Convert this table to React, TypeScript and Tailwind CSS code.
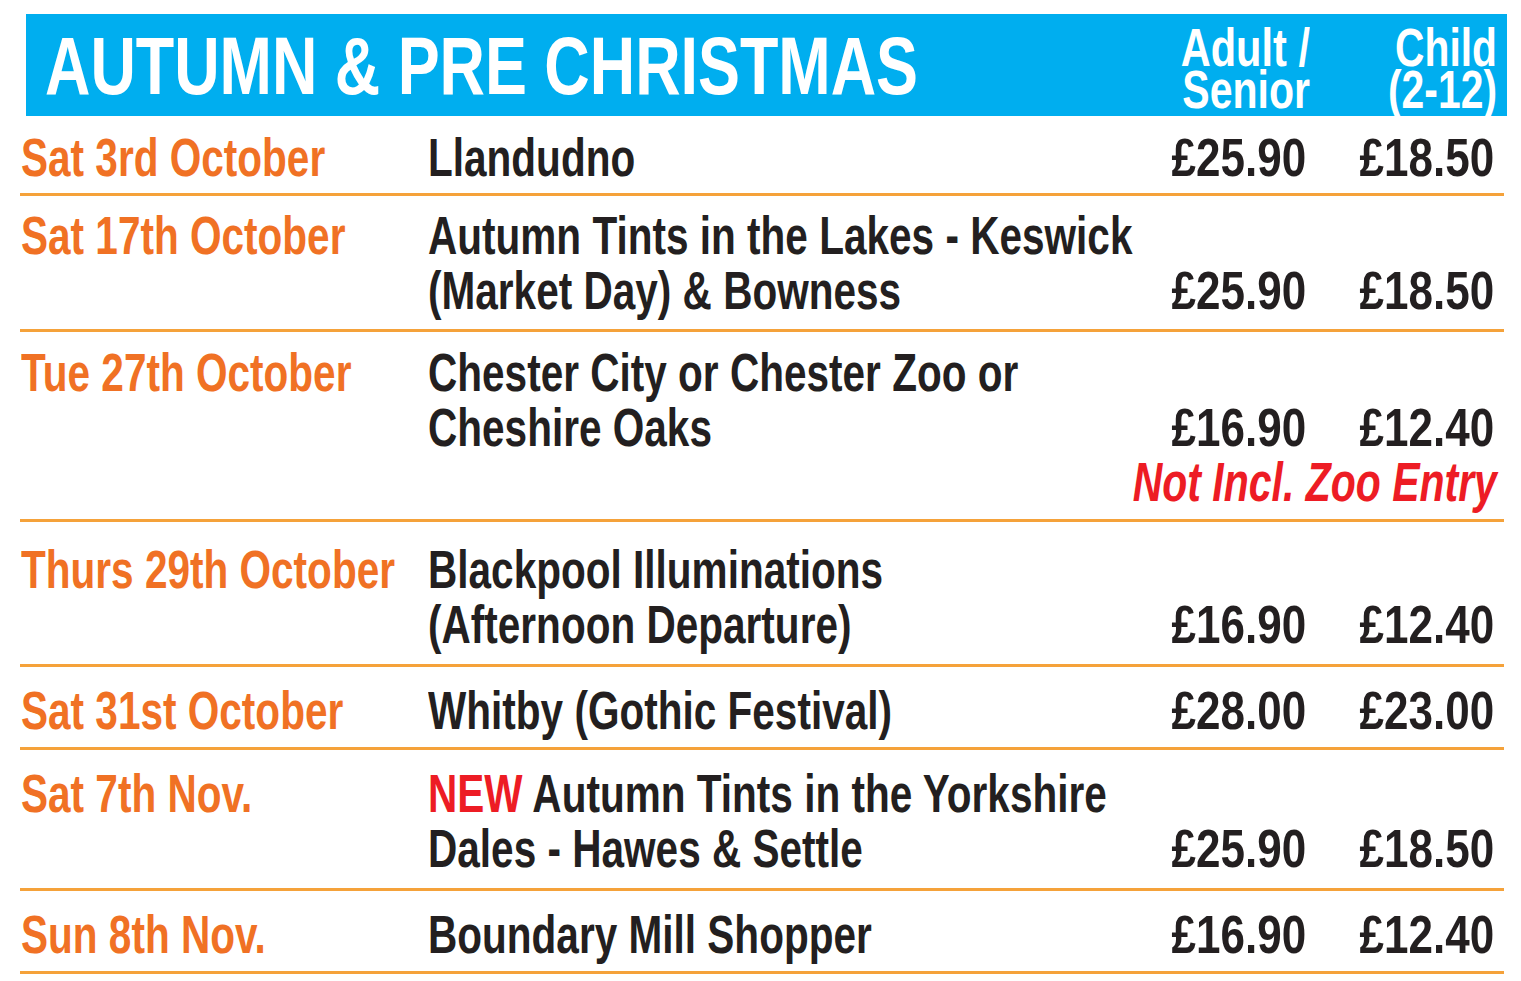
import type { ReactNode } from "react";

// Helvetica Condensed isn't installed, so Arial-metric bold text is squeezed horizontally
function Narrow({ children, right = false, className = "" }: { children: ReactNode; right?: boolean; className?: string }) {
  return (
    <span
      className={`inline-block whitespace-nowrap ${right ? "origin-right" : "origin-left"} ${className}`}
    >
      {children}
    </span>
  );
}

type Trip = {
  date: string;
  lines: ReactNode[];
  adult: string;
  child: string;
  note?: string;
  rowClass: string;
};

const trips: Trip[] = [
  { date: "Sat 3rd October", lines: ["Llandudno"], adult: "£25.90", child: "£18.50", rowClass: "h-[80px] pt-[14px]" },
  {
    date: "Sat 17th October",
    lines: ["Autumn Tints in the Lakes - Keswick", "(Market Day) & Bowness"],
    adult: "£25.90",
    child: "£18.50",
    rowClass: "h-[136px] pt-[12px]",
  },
  {
    date: "Tue 27th October",
    lines: ["Chester City or Chester Zoo or", "Cheshire Oaks"],
    adult: "£16.90",
    child: "£12.40",
    note: "Not Incl. Zoo Entry",
    rowClass: "h-[190px] pt-[13px]",
  },
  {
    date: "Thurs 29th October",
    lines: ["Blackpool Illuminations", "(Afternoon Departure)"],
    adult: "£16.90",
    child: "£12.40",
    rowClass: "h-[145px] pt-[20px]",
  },
  { date: "Sat 31st October", lines: ["Whitby (Gothic Festival)"], adult: "£28.00", child: "£23.00", rowClass: "h-[83px] pt-[16px]" },
  {
    date: "Sat 7th Nov.",
    lines: [
      <>
        <span className="text-[#ed1c24]">NEW</span> Autumn Tints in the Yorkshire
      </>,
      "Dales - Hawes & Settle",
    ],
    adult: "£25.90",
    child: "£18.50",
    rowClass: "h-[141px] pt-[16px]",
  },
  { date: "Sun 8th Nov.", lines: ["Boundary Mill Shopper"], adult: "£16.90", child: "£12.40", rowClass: "h-[83px] pt-[16px]" },
];

function TripRow({ trip }: { trip: Trip }) {
  const hasSecondLine = trip.lines.length > 1;
  return (
    <div className={`flex border-b-[3px] border-[#f5a23a] pr-[10px] text-[53px] leading-[55px] ${trip.rowClass}`}>
      <div className="w-[408px] shrink-0 pl-[1px] text-[#f07124]">
        <Narrow className="scale-x-[0.765]">{trip.date}</Narrow>
      </div>
      <div className="min-w-0 flex-1 text-[#231f20]">
        {trip.lines.map((l, i) => (
          <div key={i}>
            <Narrow className="scale-x-[0.765]">{l}</Narrow>
          </div>
        ))}
      </div>
      <div className="flex w-[376px] shrink-0 flex-col text-[#231f20]">
        {hasSecondLine && <div className="h-[55px]" />}
        <div className="flex">
          <div className="flex w-[188px] justify-end">
            <Narrow right className="scale-x-[0.83]">{trip.adult}</Narrow>
          </div>
          <div className="flex w-[188px] justify-end">
            <Narrow right className="scale-x-[0.83]">{trip.child}</Narrow>
          </div>
        </div>
        {trip.note && (
          <div className="mr-[-3px] flex justify-end text-[55px] italic text-[#ed1c24]">
            <Narrow right className="scale-x-[0.745]">{trip.note}</Narrow>
          </div>
        )}
      </div>
    </div>
  );
}

export default function App() {
  return (
    <div className="min-h-screen w-[1521px] overflow-hidden bg-white pt-[14px] font-['Liberation_Sans',Arial,sans-serif] font-bold">
      <div className="ml-[26px] flex h-[102px] w-[1481px] items-start bg-[#00aeef] pt-[12px] text-white">
        <div className="min-w-0 flex-1 pl-[19px] text-[81px] leading-[81px]">
          <Narrow className="scale-x-[0.776]">AUTUMN &amp; PRE CHRISTMAS</Narrow>
        </div>
        <div className="flex w-[200px] shrink-0 flex-col items-end text-[54px] leading-[42px]">
          <Narrow right className="scale-x-[0.77]">Adult /</Narrow>
          <Narrow right className="scale-x-[0.76]">Senior</Narrow>
        </div>
        <div className="flex w-[197px] shrink-0 flex-col items-end pr-[10px] text-[54px] leading-[42px]">
          <Narrow right className="scale-x-[0.755]">Child</Narrow>
          <Narrow right className="scale-x-[0.757]">(2-12)</Narrow>
        </div>
      </div>
      <div className="ml-[20px] w-[1484px]">
        {trips.map((t) => (
          <TripRow key={t.date} trip={t} />
        ))}
      </div>
    </div>
  );
}
